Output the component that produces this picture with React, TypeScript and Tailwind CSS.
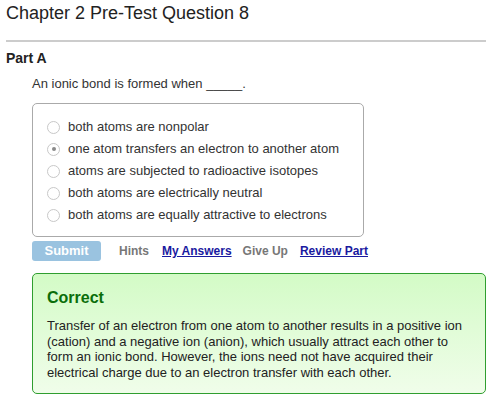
const OPTIONS = [
  "both atoms are nonpolar",
  "one atom transfers an electron to another atom",
  "atoms are subjected to radioactive isotopes",
  "both atoms are electrically neutral",
  "both atoms are equally attractive to electrons",
];

const SELECTED = 1;

function Radio({ checked }: { checked: boolean }) {
  return (
    <span className="flex h-[13px] w-[13px] shrink-0 items-center justify-center rounded-full border border-[#c8c8c8] bg-white">
      {checked ? <span className="h-[4px] w-[4px] rounded-full bg-[#8a8a8a]" /> : null}
    </span>
  );
}

export default function App() {
  return (
    <div className="h-[405px] w-[495px] overflow-hidden bg-white font-['Liberation_Sans',Arial,sans-serif]">
      <h1 className="ml-[6px] pt-[2px] text-[18px] leading-[22px] text-[#222]">
        Chapter 2 Pre-Test Question 8
      </h1>
      <div className="ml-[6px] mt-[16px] h-[2px] w-[480px] bg-[#cccccc]" />

      <h2 className="ml-[6px] mt-[8px] text-[14px] font-bold leading-[16px] text-[#222]">Part A</h2>

      <div className="ml-[32px]">
        <p className="mt-[10px] text-[13px] leading-[16px] text-[#333]">
          An ionic bond is formed when _____.
        </p>

        <div className="mt-[11px] h-[134px] w-[332px] rounded-[5px] border border-[#aaaaaa] pl-[14px] pt-[12px]">
          {OPTIONS.map((option, index) => (
            <label key={option} className="flex h-[22px] items-center gap-[8px] text-[13px] text-[#333]">
              <Radio checked={index === SELECTED} />
              {option}
            </label>
          ))}
        </div>

        <div className="mt-[4px] flex items-center text-[12px] font-bold">
          <button
            type="button"
            className="h-[20px] w-[69px] rounded-[3px] bg-[#9ac3e0] text-[13px] font-bold text-white"
          >
            Submit
          </button>
          <span className="ml-[18px] text-[#777]">Hints</span>
          <span className="ml-[13px] text-[#1a1aa0] underline">My Answers</span>
          <span className="ml-[11px] text-[#777]">Give Up</span>
          <span className="ml-[12px] text-[#1a1aa0] underline">Review Part</span>
        </div>

        <div className="mt-[12px] h-[121px] w-[454px] rounded-[5px] border border-[#2f9e2f] bg-gradient-to-b from-[#d3fbc6] to-[#f0fdea] pl-[14px] pt-[14px]">
          <div className="text-[16px] font-bold leading-[19px] text-[#0a6e0a]">Correct</div>
          <p className="mt-[11px] text-[13px] leading-[15.7px] text-[#222]">
            Transfer of an electron from one atom to another results in a positive ion
            <br />
            (cation) and a negative ion (anion), which usually attract each other to
            <br />
            form an ionic bond. However, the ions need not have acquired their
            <br />
            electrical charge due to an electron transfer with each other.
          </p>
        </div>
      </div>
    </div>
  );
}
